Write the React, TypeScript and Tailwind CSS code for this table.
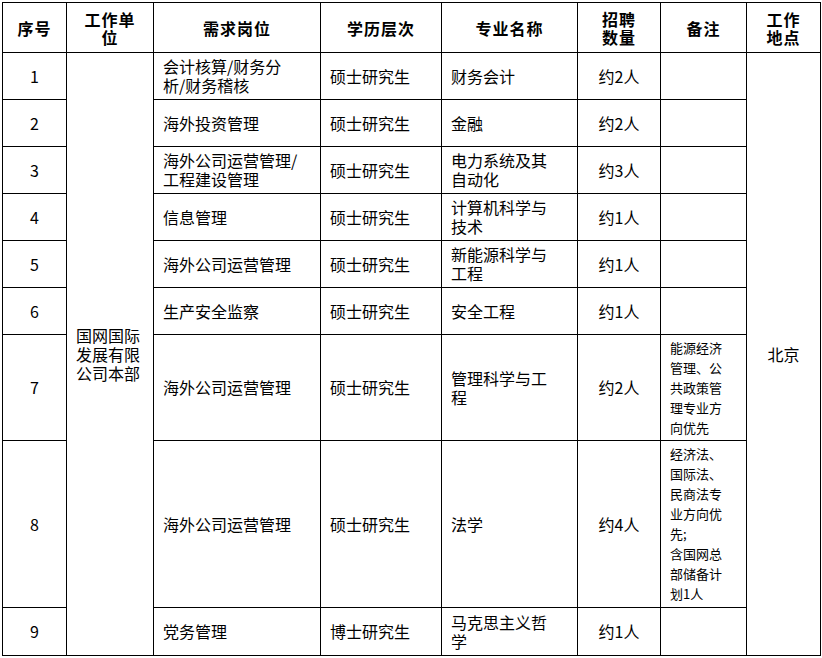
const font = { fontFamily: '"Noto Sans CJK SC", "Noto Sans", sans-serif' }

type Row = {
  no: string
  post: string[]
  degree: string
  major: string[]
  count: string
  note?: string[]
  h: string
}

const rows: Row[] = [
  { no: '1', post: ['会计核算/财务分', '析/财务稽核'], degree: '硕士研究生', major: ['财务会计'], count: '约2人', h: 'h-[47px]' },
  { no: '2', post: ['海外投资管理'], degree: '硕士研究生', major: ['金融'], count: '约2人', h: 'h-[47px]' },
  { no: '3', post: ['海外公司运营管理/', '工程建设管理'], degree: '硕士研究生', major: ['电力系统及其', '自动化'], count: '约3人', h: 'h-[47px]' },
  { no: '4', post: ['信息管理'], degree: '硕士研究生', major: ['计算机科学与', '技术'], count: '约1人', h: 'h-[47px]' },
  { no: '5', post: ['海外公司运营管理'], degree: '硕士研究生', major: ['新能源科学与', '工程'], count: '约1人', h: 'h-[47px]' },
  { no: '6', post: ['生产安全监察'], degree: '硕士研究生', major: ['安全工程'], count: '约1人', h: 'h-[47px]' },
  {
    no: '7', post: ['海外公司运营管理'], degree: '硕士研究生', major: ['管理科学与工', '程'], count: '约2人',
    note: ['能源经济', '管理、公', '共政策管', '理专业方', '向优先'], h: 'h-[106px]',
  },
  {
    no: '8', post: ['海外公司运营管理'], degree: '硕士研究生', major: ['法学'], count: '约4人',
    note: ['经济法、', '国际法、', '民商法专', '业方向优', '先;', '含国网总', '部储备计', '划1人'], h: 'h-[167px]',
  },
  { no: '9', post: ['党务管理'], degree: '博士研究生', major: ['马克思主义哲', '学'], count: '约1人', h: 'h-[48px]' },
]

function Lines({ items }: { items: string[] }) {
  return (
    <>
      {items.map((l, i) => (
        <div key={i}>{l}</div>
      ))}
    </>
  )
}

const cell = 'border border-black align-middle'
const head = 'border border-black align-middle text-center font-bold text-[16px] leading-[18px] tracking-[1px]'

export default function App() {
  return (
    <div className="bg-white w-[822px] h-[658px] pl-[2px] pt-[2px] text-black" style={font}>
      <table className="table-fixed border-collapse w-[818px] text-[16px] leading-[19px]">
        <colgroup>
          <col className="w-[64px]" />
          <col className="w-[87px]" />
          <col className="w-[167px]" />
          <col className="w-[121px]" />
          <col className="w-[136px]" />
          <col className="w-[83px]" />
          <col className="w-[86px]" />
          <col className="w-[74px]" />
        </colgroup>
        <thead>
          <tr className="h-[50px]">
            <th className={head}>序号</th>
            <th className={head}>
              <div>工作单</div>
              <div>位</div>
            </th>
            <th className={head}>需求岗位</th>
            <th className={head}>学历层次</th>
            <th className={head}>专业名称</th>
            <th className={head}>
              <div>招聘</div>
              <div>数量</div>
            </th>
            <th className={head}>备注</th>
            <th className={head}>
              <div>工作</div>
              <div>地点</div>
            </th>
          </tr>
        </thead>
        <tbody>
          {rows.map((r, i) => (
            <tr key={r.no} className={r.h}>
              <td className={`${cell} text-center`}>{r.no}</td>
              {i === 0 && (
                <td rowSpan={9} className={`${cell} pl-[9px]`}>
                  <Lines items={['国网国际', '发展有限', '公司本部']} />
                </td>
              )}
              <td className={`${cell} pl-[9px]`}>
                <Lines items={r.post} />
              </td>
              <td className={`${cell} pl-[9px]`}>{r.degree}</td>
              <td className={`${cell} pl-[9px]`}>
                <Lines items={r.major} />
              </td>
              <td className={`${cell} text-center`}>{r.count}</td>
              <td className={`${cell} pl-[9px] text-[13px] leading-[20px]`}>
                {r.note && <Lines items={r.note} />}
              </td>
              {i === 0 && (
                <td rowSpan={9} className={`${cell} text-center`}>北京</td>
              )}
            </tr>
          ))}
        </tbody>
      </table>
    </div>
  )
}
